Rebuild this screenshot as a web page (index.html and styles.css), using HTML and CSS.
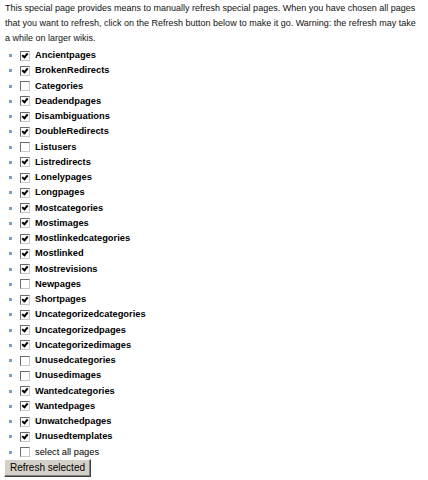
FILE: index.html
```html
<!DOCTYPE html>
<html>
<head>
<meta charset="utf-8">
<link rel="stylesheet" href="styles.css">
</head>
<body>
<form class="page">
<p class="intro">This special page provides means to manually refresh special pages. When you have chosen all pages that you want to refresh, click on the Refresh button below to make it go. Warning: the refresh may take a while on larger wikis.</p>
<ul class="list">
<li><span class="cb on"></span><b>Ancientpages</b></li>
<li><span class="cb on"></span><b>BrokenRedirects</b></li>
<li><span class="cb"></span><b>Categories</b></li>
<li><span class="cb on"></span><b>Deadendpages</b></li>
<li><span class="cb on"></span><b>Disambiguations</b></li>
<li><span class="cb on"></span><b>DoubleRedirects</b></li>
<li><span class="cb"></span><b>Listusers</b></li>
<li><span class="cb on"></span><b>Listredirects</b></li>
<li><span class="cb on"></span><b>Lonelypages</b></li>
<li><span class="cb on"></span><b>Longpages</b></li>
<li><span class="cb on"></span><b>Mostcategories</b></li>
<li><span class="cb on"></span><b>Mostimages</b></li>
<li><span class="cb on"></span><b>Mostlinkedcategories</b></li>
<li><span class="cb on"></span><b>Mostlinked</b></li>
<li><span class="cb on"></span><b>Mostrevisions</b></li>
<li><span class="cb"></span><b>Newpages</b></li>
<li><span class="cb on"></span><b>Shortpages</b></li>
<li><span class="cb on"></span><b>Uncategorizedcategories</b></li>
<li><span class="cb on"></span><b>Uncategorizedpages</b></li>
<li><span class="cb on"></span><b>Uncategorizedimages</b></li>
<li><span class="cb"></span><b>Unusedcategories</b></li>
<li><span class="cb"></span><b>Unusedimages</b></li>
<li><span class="cb on"></span><b>Wantedcategories</b></li>
<li><span class="cb on"></span><b>Wantedpages</b></li>
<li><span class="cb on"></span><b>Unwatchedpages</b></li>
<li><span class="cb on"></span><b>Unusedtemplates</b></li>
<li><span class="cb"></span><span class="plain">select all pages</span></li>
</ul>
<div class="actions"><span class="btn">Refresh selected</span></div>
</form>
</body>
</html>
```
FILE: styles.css
```css
html, body {
  margin: 0;
  padding: 0;
  background: #ffffff;
}
.page {
  font-family: "Liberation Sans", Arial, sans-serif;
  font-size: 9.3px;
  line-height: 15px;
  color: #000;
  padding: 1px 5px 0 5px;
}
.intro {
  margin: 0 0 2px 0;
  font-size: 9px;
  color: #111;
}
.list {
  list-style: none;
  margin: 0;
  padding: 0;
}
.list li {
  display: flex;
  align-items: center;
  height: 15.25px;
  position: relative;
  padding-left: 15px;
}
.list li::before {
  content: "";
  position: absolute;
  left: 4px;
  top: 6px;
  width: 3px;
  height: 3px;
  background: #7aa0c4;
}
.cb {
  box-sizing: border-box;
  width: 10px;
  height: 10px;
  border: 1px solid #6b6b6b;
  border-right-color: #c8c8c8;
  border-bottom-color: #c8c8c8;
  background: #fff;
  margin-right: 5px;
  position: relative;
}
.cb.on::after {
  content: "";
  position: absolute;
  left: 2px;
  top: 0px;
  width: 2px;
  height: 4px;
  border: solid #000;
  border-width: 0 2px 2px 0;
  transform: rotate(40deg);
}
.list b {
  font-weight: bold;
}
.plain {
  font-weight: normal;
}
.actions {
  margin-top: -1px;
}
.btn {
  display: inline-block;
  box-sizing: border-box;
  height: 18px;
  width: 87px;
  text-align: center;
  line-height: 15px;
  padding: 0;
  margin-left: -1px;
  background: #d4d0c8;
  border: 1px solid;
  border-color: #fff #404040 #404040 #fff;
  box-shadow: inset -1px -1px 0 #808080;
  font-size: 10px;
}
```
